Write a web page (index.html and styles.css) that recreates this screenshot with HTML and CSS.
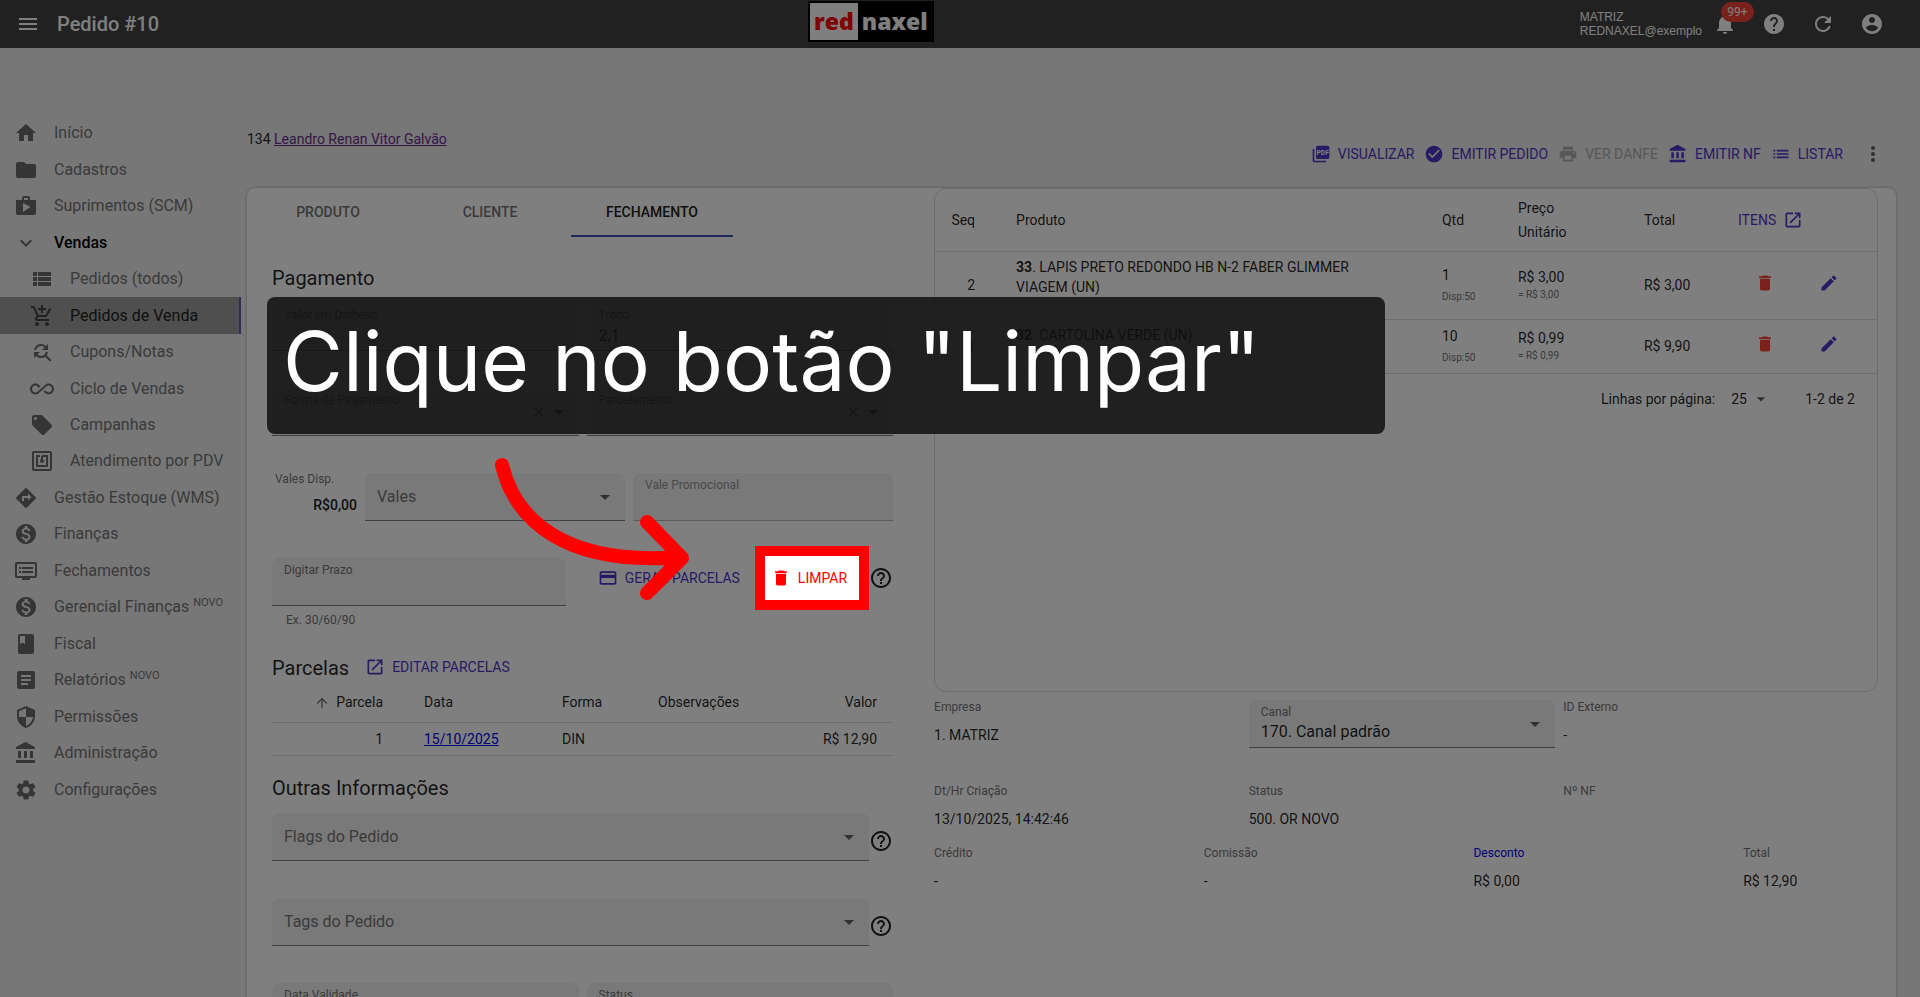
FILE: index.html
```html
<!DOCTYPE html>
<html lang="pt-BR">
<head>
    <meta charset="UTF-8">
    <meta name="viewport" content="width=device-width, initial-scale=1.0">
    <title>Pedido #10</title>
    <link rel="stylesheet" href="styles.css">
</head>
<body>
    <!-- Icons -->
    <svg class="sprite" aria-hidden="true">
        <symbol id="menu" viewBox="0 0 24 24"><path d="M3 18h18v-2H3v2zm0-5h18v-2H3v2zm0-7v2h18V6H3z"/></symbol>
        <symbol id="home" viewBox="0 0 24 24"><path d="M10 20v-6h4v6h5v-8h3L12 3 2 12h3v8z"/></symbol>
        <symbol id="folder" viewBox="0 0 24 24"><path d="M10 4H4c-1.1 0-1.99.9-1.99 2L2 18c0 1.1.9 2 2 2h16c1.1 0 2-.9 2-2V8c0-1.1-.9-2-2-2h-8l-2-2z"/></symbol>
        <symbol id="shop" viewBox="0 0 24 24"><path d="M16 6V4c0-1.11-.89-2-2-2h-4c-1.11 0-2 .89-2 2v2H2v13c0 1.11.89 2 2 2h16c1.11 0 2-.89 2-2V6h-6zm-6-2h4v2h-4V4zM9 18V9l7.5 4L9 18z"/></symbol>
        <symbol id="expand" viewBox="0 0 24 24"><path d="M16.59 8.59L12 13.17 7.41 8.59 6 10l6 6 6-6z"/></symbol>
        <symbol id="view-list" viewBox="0 0 24 24"><path d="M3 9h4V5H3v4zm0 5h4v-4H3v4zm0 5h4v-4H3v4zm5 0h13v-4H8v4zm0-5h13v-4H8v4zm0-9v4h13V5H8z"/></symbol>
        <symbol id="cart" viewBox="0 0 24 24"><path d="M11 9h2V6h3V4h-3V1h-2v3H8v2h3v3zm-4 9c-1.1 0-1.99.9-1.99 2S5.9 22 7 22s2-.9 2-2-.9-2-2-2zm10 0c-1.1 0-1.99.9-1.99 2s.89 2 1.99 2 2-.9 2-2-.9-2-2-2zm-9.83-3.25l.03-.12.9-1.63h7.45c.75 0 1.41-.41 1.75-1.03l3.86-7.01L19.42 4h-.01l-1.1 2-2.76 5H8.53l-.13-.27L6.16 6l-.95-2-.94-2H1v2h2l3.6 7.59-1.35 2.45c-.16.28-.25.61-.25.96 0 1.1.9 2 2 2h12v-2H7.42c-.13 0-.25-.11-.25-.25z"/></symbol>
        <symbol id="find" viewBox="0 0 24 24"><path d="M11 6c1.38 0 2.63.56 3.54 1.46L12 10h6V4l-2.05 2.05C14.68 4.78 12.93 4 11 4c-3.53 0-6.43 2.61-6.92 6H6.1c.46-2.28 2.48-4 4.9-4zm5.64 9.14c.66-.9 1.12-1.97 1.28-3.14H15.9c-.46 2.28-2.48 4-4.9 4-1.38 0-2.63-.56-3.54-1.46L10 12H4v6l2.05-2.05C7.32 17.22 9.07 18 11 18c1.55 0 2.98-.51 4.14-1.36L20 21.49 21.49 20l-4.85-4.86z"/></symbol>
        <symbol id="infinite" viewBox="0 0 24 24"><path d="M18.6 6.62c-1.44 0-2.8.56-3.77 1.53L12 10.66 10.48 12h.01L7.8 14.39c-.64.64-1.49.99-2.4.99-1.87 0-3.39-1.51-3.39-3.38S3.53 8.62 5.4 8.62c.91 0 1.76.35 2.44 1.03l1.13 1 1.51-1.34L9.22 8.2C8.2 7.18 6.84 6.62 5.4 6.62 2.42 6.62 0 9.04 0 12s2.42 5.38 5.4 5.38c1.44 0 2.8-.56 3.77-1.53l2.83-2.5.01.01L13.52 12h-.01l2.69-2.39c.64-.64 1.49-.99 2.4-.99 1.87 0 3.39 1.51 3.39 3.38s-1.52 3.38-3.39 3.38c-.9 0-1.76-.35-2.44-1.03l-1.14-1.01-1.51 1.34 1.27 1.12c1.02 1.01 2.37 1.57 3.82 1.57 2.98 0 5.4-2.41 5.4-5.38s-2.42-5.37-5.4-5.37z"/></symbol>
        <symbol id="offer" viewBox="0 0 24 24"><path d="M21.41 11.58l-9-9C12.05 2.22 11.55 2 11 2H4c-1.1 0-2 .9-2 2v7c0 .55.22 1.05.59 1.42l9 9c.36.36.86.58 1.41.58.55 0 1.05-.22 1.41-.59l7-7c.37-.36.59-.86.59-1.41 0-.55-.23-1.06-.59-1.42zM5.5 7C4.67 7 4 6.33 4 5.5S4.67 4 5.5 4 7 4.67 7 5.5 6.33 7 5.5 7z"/></symbol>
        <symbol id="nfc" viewBox="0 0 24 24"><path d="M20 2H4c-1.1 0-2 .9-2 2v16c0 1.1.9 2 2 2h16c1.1 0 2-.9 2-2V4c0-1.1-.9-2-2-2zm0 18H4V4h16v16zM18 6h-5c-1.1 0-2 .9-2 2v2.28c-.6.35-1 .98-1 1.72 0 1.1.9 2 2 2s2-.9 2-2c0-.74-.4-1.38-1-1.72V8h3v8H8V8h2V6H6v12h12V6z"/></symbol>
        <symbol id="directions" viewBox="0 0 24 24"><path d="M21.71 11.29l-9-9c-.39-.39-1.02-.39-1.41 0l-9 9c-.39.39-.39 1.02 0 1.41l9 9c.39.39 1.02.39 1.41 0l9-9c.39-.38.39-1.01 0-1.41zM14 14.5V12h-4v3H8v-4c0-.55.45-1 1-1h5V7.5l3.5 3.5-3.5 3.5z"/></symbol>
        <symbol id="money" viewBox="0 0 24 24"><path d="M12 2C6.48 2 2 6.48 2 12s4.48 10 10 10 10-4.48 10-10S17.52 2 12 2zm1.41 16.09V20h-2.67v-1.93c-1.71-.36-3.16-1.46-3.27-3.4h1.96c.1 1.05.82 1.87 2.65 1.87 1.96 0 2.4-.98 2.4-1.59 0-.83-.44-1.61-2.67-2.14-2.48-.6-4.18-1.62-4.18-3.67 0-1.72 1.39-2.84 3.11-3.21V4h2.67v1.95c1.86.45 2.79 1.86 2.85 3.39H14.3c-.05-1.11-.64-1.87-2.22-1.87-1.5 0-2.4.68-2.4 1.64 0 .84.65 1.39 2.67 1.91s4.18 1.39 4.18 3.91c-.01 1.83-1.38 2.83-3.12 3.16z"/></symbol>
        <symbol id="dvr" viewBox="0 0 24 24"><path d="M21 3H3c-1.1 0-2 .9-2 2v12c0 1.1.9 2 2 2h5v2h8v-2h5c1.1 0 1.99-.9 1.99-2L23 5c0-1.1-.9-2-2-2zm0 14H3V5h18v12zm-2-9H8v2h11V8zm0 4H8v2h11v-2zM7 8H5v2h2V8zm0 4H5v2h2v-2z"/></symbol>
        <symbol id="book" viewBox="0 0 24 24"><path d="M18 2H6c-1.1 0-2 .9-2 2v16c0 1.1.9 2 2 2h12c1.1 0 2-.9 2-2V4c0-1.1-.9-2-2-2zM6 4h5v8l-2.5-1.5L6 12V4z"/></symbol>
        <symbol id="article" viewBox="0 0 24 24"><path d="M19 3H5c-1.1 0-2 .9-2 2v14c0 1.1.9 2 2 2h14c1.1 0 2-.9 2-2V5c0-1.1-.9-2-2-2zm-5 14H7v-2h7v2zm3-4H7v-2h10v2zm0-4H7V7h10v2z"/></symbol>
        <symbol id="shield" viewBox="0 0 24 24"><path d="M12 1L3 5v6c0 5.55 3.84 10.74 9 12 5.16-1.26 9-6.45 9-12V5l-9-4zm0 10.99h7c-.53 4.12-3.28 7.79-7 8.94V12H5V6.3l7-3.11v8.8z"/></symbol>
        <symbol id="bank" viewBox="0 0 24 24"><path d="M4 10v7h3v-7H4zm6 0v7h3v-7h-3zM2 22h19v-3H2v3zm14-12v7h3v-7h-3zm-4.5-9L2 6v2h19V6l-9.5-5z"/></symbol>
        <symbol id="settings" viewBox="0 0 24 24"><path d="M19.14 12.94c.04-.3.06-.61.06-.94 0-.32-.02-.64-.07-.94l2.03-1.58c.18-.14.23-.41.12-.61l-1.92-3.32c-.12-.22-.37-.29-.59-.22l-2.39.96c-.5-.38-1.03-.7-1.62-.94l-.36-2.54c-.04-.24-.24-.41-.48-.41h-3.84c-.24 0-.43.17-.47.41l-.36 2.54c-.59.24-1.13.57-1.62.94l-2.39-.96c-.22-.08-.47 0-.59.22L2.74 8.87c-.12.21-.08.47.12.61l2.03 1.58c-.05.3-.09.63-.09.94s.02.64.07.94l-2.03 1.58c-.18.14-.23.41-.12.61l1.92 3.32c.12.22.37.29.59.22l2.39-.96c.5.38 1.03.7 1.62.94l.36 2.54c.05.24.24.41.48.41h3.84c.24 0 .44-.17.47-.41l.36-2.54c.59-.24 1.13-.56 1.62-.94l2.39.96c.22.08.47 0 .59-.22l1.92-3.32c.12-.22.07-.47-.12-.61l-2.01-1.58zM12 15.6c-1.98 0-3.6-1.62-3.6-3.6s1.62-3.6 3.6-3.6 3.6 1.62 3.6 3.6-1.62 3.6-3.6 3.6z"/></symbol>
        <symbol id="bell" viewBox="0 0 24 24"><path d="M12 22c1.1 0 2-.9 2-2h-4c0 1.1.89 2 2 2zm6-6v-5c0-3.07-1.64-5.64-4.5-6.32V4c0-.83-.67-1.5-1.5-1.5s-1.5.67-1.5 1.5v.68C7.63 5.36 6 7.92 6 11v5l-2 2v1h16v-1l-2-2z"/></symbol>
        <symbol id="help" viewBox="0 0 24 24"><path d="M12 2C6.48 2 2 6.48 2 12s4.48 10 10 10 10-4.48 10-10S17.52 2 12 2zm1 17h-2v-2h2v2zm2.07-7.75l-.9.92C13.45 12.9 13 13.5 13 15h-2v-.5c0-1.1.45-2.1 1.17-2.83l1.24-1.26c.37-.36.59-.86.59-1.41 0-1.1-.9-2-2-2s-2 .9-2 2H8c0-2.21 1.79-4 4-4s4 1.79 4 4c0 .88-.36 1.68-.93 2.25z"/></symbol>
        <symbol id="help-outline" viewBox="0 0 24 24"><path d="M11 18h2v-2h-2v2zm1-16C6.48 2 2 6.48 2 12s4.48 10 10 10 10-4.48 10-10S17.52 2 12 2zm0 18c-4.41 0-8-3.59-8-8s3.59-8 8-8 8 3.59 8 8-3.59 8-8 8zm0-14c-2.21 0-4 1.79-4 4h2c0-1.1.9-2 2-2s2 .9 2 2c0 2-3 1.75-3 5h2c0-2.25 3-2.5 3-5 0-2.21-1.79-4-4-4z"/></symbol>
        <symbol id="refresh" viewBox="0 0 24 24"><path d="M17.65 6.35C16.2 4.9 14.21 4 12 4c-4.42 0-7.99 3.58-7.99 8s3.57 8 7.99 8c3.73 0 6.84-2.55 7.73-6h-2.08c-.82 2.33-3.04 4-5.65 4-3.31 0-6-2.69-6-6s2.69-6 6-6c1.66 0 3.14.69 4.22 1.78L13 11h7V4l-2.35 2.35z"/></symbol>
        <symbol id="account" viewBox="0 0 24 24"><path d="M12 2C6.48 2 2 6.48 2 12s4.48 10 10 10 10-4.48 10-10S17.52 2 12 2zm0 3c1.66 0 3 1.34 3 3s-1.34 3-3 3-3-1.34-3-3 1.34-3 3-3zm0 14.2c-2.5 0-4.71-1.28-6-3.22.03-1.99 4-3.08 6-3.08 1.99 0 5.97 1.09 6 3.08-1.29 1.94-3.5 3.22-6 3.22z"/></symbol>
        <symbol id="pdf" viewBox="0 0 24 24"><path d="M20 2H8c-1.1 0-2 .9-2 2v12c0 1.1.9 2 2 2h12c1.1 0 2-.9 2-2V4c0-1.1-.9-2-2-2zM4 6H2v14c0 1.1.9 2 2 2h14v-2H4V6z"/><text x="14" y="13" class="pdf-text">PDF</text></symbol>
        <symbol id="check" viewBox="0 0 24 24"><path d="M12 2C6.48 2 2 6.48 2 12s4.48 10 10 10 10-4.48 10-10S17.52 2 12 2zm-2 15l-5-5 1.41-1.41L10 14.17l7.59-7.59L19 8l-9 9z"/></symbol>
        <symbol id="print" viewBox="0 0 24 24"><path d="M19 8H5c-1.66 0-3 1.34-3 3v6h4v4h12v-4h4v-6c0-1.66-1.34-3-3-3zm-3 11H8v-5h8v5zm3-7c-.55 0-1-.45-1-1s.45-1 1-1 1 .45 1 1-.45 1-1 1zm-1-9H6v4h12V3z"/></symbol>
        <symbol id="list" viewBox="0 0 24 24"><path d="M3 13h2v-2H3v2zm0 4h2v-2H3v2zm0-8h2V7H3v2zm4 4h14v-2H7v2zm0 4h14v-2H7v2zM7 7v2h14V7H7z"/></symbol>
        <symbol id="more" viewBox="0 0 24 24"><path d="M12 8c1.1 0 2-.9 2-2s-.9-2-2-2-2 .9-2 2 .9 2 2 2zm0 2c-1.1 0-2 .9-2 2s.9 2 2 2 2-.9 2-2-.9-2-2-2zm0 6c-1.1 0-2 .9-2 2s.9 2 2 2 2-.9 2-2-.9-2-2-2z"/></symbol>
        <symbol id="open" viewBox="0 0 24 24"><path d="M19 19H5V5h7V3H5c-1.11 0-2 .9-2 2v14c0 1.1.89 2 2 2h14c1.1 0 2-.9 2-2v-7h-2v7zM14 3v2h3.59l-9.83 9.83 1.41 1.41L19 6.41V10h2V3h-7z"/></symbol>
        <symbol id="delete" viewBox="0 0 24 24"><path d="M6 19c0 1.1.9 2 2 2h8c1.1 0 2-.9 2-2V7H6v12zM19 4h-3.5l-1-1h-5l-1 1H5v2h14V4z"/></symbol>
        <symbol id="edit" viewBox="0 0 24 24"><path d="M3 17.25V21h3.75L17.81 9.94l-3.75-3.75L3 17.25zM20.71 7.04c.39-.39.39-1.02 0-1.41l-2.34-2.34c-.39-.39-1.02-.39-1.41 0l-1.83 1.83 3.75 3.75 1.83-1.83z"/></symbol>
        <symbol id="payment" viewBox="0 0 24 24"><path d="M20 4H4c-1.11 0-1.99.89-1.99 2L2 18c0 1.11.89 2 2 2h16c1.11 0 2-.89 2-2V6c0-1.11-.89-2-2-2zm0 14H4v-6h16v6zm0-10H4V6h16v2z"/></symbol>
        <symbol id="up" viewBox="0 0 24 24"><path d="M4 12l1.41 1.41L11 7.83V20h2V7.83l5.58 5.59L20 12l-8-8-8 8z"/></symbol>
        <symbol id="drop" viewBox="0 0 24 24"><path d="M7 10l5 5 5-5z"/></symbol>
        <symbol id="close" viewBox="0 0 24 24"><path d="M19 6.41L17.59 5 12 10.59 6.41 5 5 6.41 10.59 12 5 17.59 6.41 19 12 13.41 17.59 19 19 17.59 13.41 12z"/></symbol>
    </svg>

    <header class="header">
        <div class="header-left">
            <button class="icon-button" aria-label="Menu"><svg class="icon"><use href="#menu"/></svg></button>
            <h1>Pedido #10</h1>
        </div>
        <div class="logo"><span class="logo-red">red</span><span class="logo-name">naxel</span></div>
        <div class="header-right">
            <div class="user">MATRIZ<br>REDNAXEL@exemplo</div>
            <button class="icon-button bell" aria-label="Notificações"><svg class="icon"><use href="#bell"/></svg><span class="badge">99+</span></button>
            <button class="icon-button" aria-label="Ajuda"><svg class="icon"><use href="#help"/></svg></button>
            <button class="icon-button" aria-label="Atualizar"><svg class="icon"><use href="#refresh"/></svg></button>
            <button class="icon-button" aria-label="Conta"><svg class="icon"><use href="#account"/></svg></button>
        </div>
    </header>

    <div class="layout">
        <nav class="sidebar">
            <a href="#"><svg class="icon"><use href="#home"/></svg>Início</a>
            <a href="#"><svg class="icon"><use href="#folder"/></svg>Cadastros</a>
            <a href="#"><svg class="icon"><use href="#shop"/></svg>Suprimentos (SCM)</a>
            <a href="#" class="open"><svg class="icon"><use href="#expand"/></svg>Vendas</a>
            <a href="#" class="sub"><svg class="icon"><use href="#view-list"/></svg>Pedidos (todos)</a>
            <a href="#" class="sub active"><svg class="icon"><use href="#cart"/></svg>Pedidos de Venda</a>
            <a href="#" class="sub"><svg class="icon"><use href="#find"/></svg>Cupons/Notas</a>
            <a href="#" class="sub"><svg class="icon"><use href="#infinite"/></svg>Ciclo de Vendas</a>
            <a href="#" class="sub"><svg class="icon"><use href="#offer"/></svg>Campanhas</a>
            <a href="#" class="sub"><svg class="icon"><use href="#nfc"/></svg>Atendimento por PDV</a>
            <a href="#"><svg class="icon"><use href="#directions"/></svg>Gestão Estoque (WMS)</a>
            <a href="#"><svg class="icon"><use href="#money"/></svg>Finanças</a>
            <a href="#"><svg class="icon"><use href="#dvr"/></svg>Fechamentos</a>
            <a href="#"><svg class="icon"><use href="#money"/></svg><span>Gerencial Finanças <sup>NOVO</sup></span></a>
            <a href="#"><svg class="icon"><use href="#book"/></svg>Fiscal</a>
            <a href="#"><svg class="icon"><use href="#article"/></svg><span>Relatórios <sup>NOVO</sup></span></a>
            <a href="#"><svg class="icon"><use href="#shield"/></svg>Permissões</a>
            <a href="#"><svg class="icon"><use href="#bank"/></svg>Administração</a>
            <a href="#"><svg class="icon"><use href="#settings"/></svg>Configurações</a>
        </nav>

        <main class="main">
            <div class="toolbar">
                <div class="customer">134 <a href="#">Leandro Renan Vitor Galvão</a></div>
                <div class="actions">
                    <button class="action"><svg class="icon"><use href="#pdf"/></svg>VISUALIZAR</button>
                    <button class="action"><svg class="icon"><use href="#check"/></svg>EMITIR PEDIDO</button>
                    <button class="action" disabled><svg class="icon"><use href="#print"/></svg>VER DANFE</button>
                    <button class="action"><svg class="icon"><use href="#bank"/></svg>EMITIR NF</button>
                    <button class="action"><svg class="icon"><use href="#list"/></svg>LISTAR</button>
                    <button class="icon-button more" aria-label="Mais opções"><svg class="icon"><use href="#more"/></svg></button>
                </div>
            </div>

            <div class="card">
                <section class="payment">
                    <div class="tabs">
                        <button class="tab">PRODUTO</button>
                        <button class="tab">CLIENTE</button>
                        <button class="tab selected">FECHAMENTO</button>
                    </div>

                    <div class="form">
                        <h2>Pagamento</h2>
                        <div class="row">
                            <div class="field"><label for="dinheiro">Valor em Dinheiro</label><input id="dinheiro" type="text"></div>
                            <div class="field"><label for="troco">Troco</label><input id="troco" type="text" value="2,1"></div>
                        </div>
                        <div class="row">
                            <div class="field">
                                <label for="forma">Forma de Pagamento</label>
                                <select id="forma"><option></option></select>
                                <span class="adorn"><svg class="icon small"><use href="#close"/></svg><svg class="icon"><use href="#drop"/></svg></span>
                            </div>
                            <div class="field">
                                <label for="parcelamento">Parcelamento</label>
                                <select id="parcelamento"><option></option></select>
                                <span class="adorn"><svg class="icon small"><use href="#close"/></svg><svg class="icon"><use href="#drop"/></svg></span>
                            </div>
                        </div>
                        <div class="row">
                            <div class="available"><span>Vales Disp.</span><strong>R$0,00</strong></div>
                            <div class="field empty">
                                <select aria-label="Vales"><option>Vales</option></select>
                                <span class="adorn"><svg class="icon"><use href="#drop"/></svg></span>
                            </div>
                            <div class="field light"><label for="promo">Vale Promocional</label><input id="promo" type="text" disabled></div>
                        </div>
                        <div class="row prazo">
                            <div class="prazo-field">
                                <div class="field"><label for="prazo">Digitar Prazo</label><input id="prazo" type="text"></div>
                                <p class="hint">Ex. 30/60/90</p>
                            </div>
                            <div class="prazo-actions">
                                <button class="action"><svg class="icon"><use href="#payment"/></svg>GERAR PARCELAS</button>
                                <button class="action clear"><svg class="icon"><use href="#delete"/></svg>LIMPAR<span class="spotlight"></span></button>
                                <button class="icon-button help" aria-label="Ajuda"><svg class="icon"><use href="#help-outline"/></svg></button>
                            </div>
                        </div>

                        <div class="subtitle">
                            <h2>Parcelas</h2>
                            <button class="action"><svg class="icon"><use href="#open"/></svg>EDITAR PARCELAS</button>
                        </div>
                        <table class="installments">
                            <thead>
                                <tr><th class="num"><svg class="icon small"><use href="#up"/></svg>Parcela</th><th>Data</th><th>Forma</th><th>Observações</th><th class="num">Valor</th></tr>
                            </thead>
                            <tbody>
                                <tr><td class="num">1</td><td><a href="#">15/10/2025</a></td><td>DIN</td><td></td><td class="num">R$ 12,90</td></tr>
                            </tbody>
                        </table>

                        <h2>Outras Informações</h2>
                        <div class="row tagged">
                            <div class="field empty">
                                <select aria-label="Flags do Pedido"><option>Flags do Pedido</option></select>
                                <span class="adorn"><svg class="icon"><use href="#drop"/></svg></span>
                            </div>
                            <button class="icon-button help" aria-label="Ajuda"><svg class="icon"><use href="#help-outline"/></svg></button>
                        </div>
                        <div class="row tagged">
                            <div class="field empty">
                                <select aria-label="Tags do Pedido"><option>Tags do Pedido</option></select>
                                <span class="adorn"><svg class="icon"><use href="#drop"/></svg></span>
                            </div>
                            <button class="icon-button help" aria-label="Ajuda"><svg class="icon"><use href="#help-outline"/></svg></button>
                        </div>
                        <div class="row">
                            <div class="field"><label for="validade">Data Validade</label><input id="validade" type="text"></div>
                            <div class="field"><label for="status">Status</label><input id="status" type="text"></div>
                        </div>
                    </div>
                </section>

                <section class="order">
                    <div class="items">
                        <table>
                            <colgroup><col class="c-seq"><col><col class="c-qty"><col class="c-price"><col class="c-total"><col class="c-del"><col class="c-edit"></colgroup>
                            <thead>
                                <tr><th class="seq">Seq</th><th>Produto</th><th>Qtd</th><th class="price">Preço Unitário</th><th>Total</th><th colspan="2" class="th-items"><button class="action">ITENS<svg class="icon"><use href="#open"/></svg></button></th></tr>
                            </thead>
                            <tbody>
                                <tr class="tall">
                                    <td class="seq">2</td>
                                    <td class="product"><b>33</b>. LAPIS PRETO REDONDO HB N-2 FABER GLIMMER VIAGEM (UN)</td>
                                    <td>1<small class="stock">Disp:50</small></td>
                                    <td>R$ 3,00<small>= R$ 3,00</small></td>
                                    <td>R$ 3,00</td>
                                    <td class="tool"><button class="icon-button del" aria-label="Excluir"><svg class="icon"><use href="#delete"/></svg></button></td>
                                    <td class="tool last"><button class="icon-button edit" aria-label="Editar"><svg class="icon"><use href="#edit"/></svg></button></td>
                                </tr>
                                <tr>
                                    <td class="seq">1</td>
                                    <td class="product"><b>32</b>. CARTOLINA VERDE (UN)</td>
                                    <td>10<small class="stock">Disp:50</small></td>
                                    <td>R$ 0,99<small>= R$ 0,99</small></td>
                                    <td>R$ 9,90</td>
                                    <td class="tool"><button class="icon-button del" aria-label="Excluir"><svg class="icon"><use href="#delete"/></svg></button></td>
                                    <td class="tool last"><button class="icon-button edit" aria-label="Editar"><svg class="icon"><use href="#edit"/></svg></button></td>
                                </tr>
                            </tbody>
                        </table>
                        <div class="pagination">
                            <label for="linhas">Linhas por página:</label>
                            <span class="page-size"><select id="linhas"><option>25</option></select><svg class="icon"><use href="#drop"/></svg></span>
                            <span>1-2 de 2</span>
                        </div>
                    </div>

                    <div class="info three">
                        <div class="data"><span>Empresa</span><p>1. MATRIZ</p></div>
                        <div class="field">
                            <label for="canal">Canal</label>
                            <select id="canal"><option>170. Canal padrão</option></select>
                            <span class="adorn"><svg class="icon"><use href="#drop"/></svg></span>
                        </div>
                        <div class="data"><span>ID Externo</span><p>-</p></div>
                    </div>
                    <div class="info three">
                        <div class="data"><span>Dt/Hr Criação</span><p>13/10/2025, 14:42:46</p></div>
                        <div class="data"><span>Status</span><p>500. OR NOVO</p></div>
                        <div class="data"><span>Nº NF</span></div>
                    </div>
                    <div class="info totals">
                        <div class="data"><span>Crédito</span><p>-</p></div>
                        <div class="data"><span>Comissão</span><p>-</p></div>
                        <div class="data"><a href="#">Desconto</a><p>R$ 0,00</p></div>
                        <div class="data"><span>Total</span><p>R$ 12,90</p></div>
                    </div>
                </section>
            </div>
        </main>
    </div>

    <!-- Tutorial step -->
    <div class="callout">Clique no botão "Limpar"</div>
    <svg class="arrow" viewBox="0 0 200 150" aria-hidden="true">
        <path d="M12 15C25 70 75 116 190 107M157 72L192 108L157 143"/>
    </svg>
</body>
</html>
```
FILE: styles.css
```css
* {
    margin: 0;
    padding: 0;
    box-sizing: border-box;
}

body {
    background-color: #eeeeee;
    color: rgba(0, 0, 0, 0.87);
    font-family: Roboto, "Liberation Sans", sans-serif;
    font-size: 14px;
    line-height: 20px;
    height: 100vh;
    overflow: hidden;
}

button, input, select {
    font: inherit;
    color: inherit;
    background: none;
    border: none;
    outline: none;
}

.sprite {
    display: none;
}

.pdf-text {
    font-size: 8px;
    font-weight: 700;
    text-anchor: middle;
    fill: #ffffff;
}

.icon {
    width: 24px;
    height: 24px;
    fill: currentColor;
    flex-shrink: 0;
    display: block;
}

.icon.small {
    width: 16px;
    height: 16px;
}

.icon-button {
    display: inline-flex;
    cursor: pointer;
}

/* Header */
.header {
    display: grid;
    grid-template-columns: 5fr auto 6fr;
    align-items: center;
    height: 48px;
    padding: 0 36px 0 16px;
    background-color: #424242;
    color: #ffffff;
}

.header-left {
    display: flex;
    align-items: center;
    gap: 17px;
}

.header h1 {
    font-size: 20px;
    font-weight: 500;
}

.logo {
    display: flex;
    height: 41px;
    margin-bottom: 6px;
    padding: 2px;
    background-color: #000000;
    font-family: "Open Sans", sans-serif;
    font-size: 23px;
    font-weight: 800;
    line-height: 37px;
}

.logo-red {
    padding: 0 4px;
    background-color: #ffffff;
    color: #ff0000;
}

.logo-name {
    padding: 0 4px;
}

.header-right {
    display: flex;
    align-items: center;
    justify-content: flex-end;
    gap: 25px;
}

.user {
    font-family: "Liberation Sans", sans-serif;
    font-size: 12px;
    line-height: 14px;
    margin-right: -14px;
}

.bell {
    position: relative;
}

.badge {
    position: absolute;
    left: 8px;
    bottom: 14px;
    min-width: 33px;
    padding: 0 6px;
    border-radius: 10px;
    background-color: #f44336;
    font-size: 12px;
}

/* Layout */
.layout {
    display: flex;
}

.sidebar {
    display: grid;
    grid-auto-rows: 1fr;
    flex: 0 0 241px;
    height: 693px;
    margin-top: 67px;
}

.sidebar a {
    display: flex;
    align-items: center;
    gap: 16px;
    padding-left: 14px;
    color: #757575;
    font-size: 16px;
    text-decoration: none;
    white-space: nowrap;
}

.sidebar .icon {
    color: #6a6a6a;
}

.sidebar a.sub {
    padding-left: 30px;
}

.sidebar a.open {
    color: #000000;
    font-weight: 500;
}

.sidebar a.active {
    background-color: #9e9e9e;
    border-right: 2px solid #5c5cb0;
    color: #212121;
}

.sidebar a.active .icon {
    color: #424242;
}

.sidebar sup {
    font-size: 11px;
    line-height: 0;
}

.main {
    flex: 1;
    min-width: 0;
    padding: 0 24px 0 6px;
}

.toolbar {
    display: flex;
    justify-content: space-between;
    height: 140px;
    padding-top: 81px;
}

.customer a {
    color: #6a2c91;
}

.actions {
    display: flex;
    align-items: center;
    gap: 10px;
    height: 50px;
}

.action {
    display: inline-flex;
    align-items: center;
    gap: 7px;
    color: #5035c8;
    white-space: nowrap;
    cursor: pointer;
}

.action .icon {
    width: 20px;
    height: 20px;
}

.action:disabled {
    color: #b0b0b0;
}

.more {
    margin: 0 11px 0 8px;
    color: #616161;
}

/* Order card */
.card {
    display: grid;
    grid-template-columns: 5fr 7fr;
    min-height: 900px;
    background-color: #ffffff;
    border-radius: 8px;
    box-shadow: 0 0 3px rgba(0, 0, 0, 0.3);
}

.tabs {
    display: flex;
}

.tab {
    width: 162px;
    height: 49px;
    border-bottom: 2px solid transparent;
    color: #757575;
    font-weight: 500;
    cursor: pointer;
}

.tab.selected {
    border-color: #3f51b5;
    color: #212121;
}

.form {
    padding: 27px 41px 0 25px;
}

h2 {
    font-size: 20px;
    font-weight: 400;
    line-height: 28px;
    margin-bottom: 11px;
}

.row {
    display: flex;
    gap: 8px;
    margin-bottom: 37px;
}

.field {
    position: relative;
    flex: 1;
    height: 48px;
    padding: 0 12px;
    background-color: #f3f3f3;
    border-bottom: 1px solid #808080;
    border-radius: 8px 8px 0 0;
}

.field.light {
    border-bottom-color: #b8b8b8;
}

.field label {
    display: block;
    padding-top: 4px;
    color: #757575;
    font-size: 12px;
    line-height: 16px;
}

.field input, .field select {
    display: block;
    width: 100%;
    height: 24px;
    font-size: 16px;
    appearance: none;
}

.field.light label {
    color: #949494;
}

.field.empty select {
    height: 48px;
    color: #757575;
}

.adorn {
    position: absolute;
    top: 12px;
    right: 8px;
    display: flex;
    align-items: center;
    color: #616161;
    pointer-events: none;
}

.available {
    display: flex;
    flex-direction: column;
    width: 85px;
    padding-left: 3px;
    color: #757575;
    font-size: 12px;
    line-height: 12px;
}

.available strong {
    align-self: flex-end;
    margin-top: 10px;
    color: #212121;
    font-size: 14px;
    font-weight: 500;
    line-height: 20px;
}

.prazo {
    justify-content: space-between;
    margin-bottom: 20px;
}

.prazo-field {
    width: 294px;
}

.hint {
    padding: 4px 14px;
    color: #757575;
    font-size: 12px;
}

.prazo-actions {
    display: flex;
    align-items: center;
    height: 40px;
}

.clear {
    position: relative;
    margin: 0 22px 0 31px;
    color: #ff0000;
}

/* Everything outside the highlighted button is dimmed */
.spotlight {
    position: absolute;
    z-index: 10;
    inset: -22px -22px -22px -16px;
    border: 10px solid #ff0000;
    box-shadow: 0 0 0 9999px rgba(0, 0, 0, 0.5);
}

.subtitle {
    display: flex;
    gap: 16px;
    height: 28px;
}

.subtitle .action {
    height: 26px;
}

table {
    width: 100%;
    border-collapse: collapse;
}

th {
    font-weight: 400;
    text-align: left;
}

.num {
    text-align: right;
}

.installments {
    margin-bottom: 18px;
    table-layout: fixed;
}

.installments th, .installments td {
    height: 33px;
    padding: 0 16px;
    border-bottom: 1px solid #dddddd;
}

.installments th {
    height: 40px;
}

.installments .num:first-child {
    padding-right: 25px;
}

.installments th .icon {
    display: inline-block;
    margin-right: 6px;
    vertical-align: middle;
    color: #757575;
}

.installments th:nth-child(1) { width: 136px; }
.installments th:nth-child(2) { width: 138px; }
.installments th:nth-child(3) { width: 96px; }
.installments th:nth-child(4) { width: 140px; }

.installments a {
    color: #0000ee;
}

.tagged {
    align-items: center;
    gap: 0;
}

.help {
    color: #212121;
}

.tagged .help {
    margin-top: 8px;
}

/* Items and totals */
.order {
    padding-right: 18px;
}

.items {
    height: 504px;
    margin-bottom: 8px;
    border: 1px solid #dddddd;
    border-radius: 12px;
}

.items table {
    table-layout: fixed;
}

.items th, .items td {
    height: 54px;
    padding: 0 16px;
    border-bottom: 1px solid #dddddd;
}

.items th {
    height: 62px;
    line-height: 24px;
}

.items .tall td {
    height: 68px;
}

.c-seq { width: 65px; }
.c-qty { width: 76px; }
.c-price { width: 126px; }
.c-total { width: 105px; }
.c-del { width: 64px; }
.c-edit { width: 80px; }

.items .seq {
    padding-right: 25px;
    text-align: right;
}

.items .th-items {
    padding-left: 5px;
}

.items .price {
    padding-right: 50px;
}

.items .product {
    padding: 5px 50px 0 16px;
    vertical-align: top;
}

.items small {
    display: block;
    color: #757575;
    font-size: 10px;
    line-height: 16px;
}

.items .stock {
    margin-top: 4px;
}

.items .tool {
    padding: 0;
    text-align: center;
}

.items .tool.last {
    padding-right: 16px;
}

.tool .icon {
    width: 20px;
    height: 20px;
}

.del {
    color: #f44336;
}

.edit {
    color: #5035c8;
}

.pagination {
    display: flex;
    justify-content: flex-end;
    gap: 16px;
    padding: 15px 22px 0 0;
}

.page-size {
    display: flex;
    align-items: center;
    margin-right: 16px;
}

.page-size select {
    width: 18px;
    appearance: none;
}

.page-size .icon {
    height: 20px;
    color: #616161;
}

.info {
    display: grid;
}

.three {
    grid-template-columns: repeat(3, 1fr);
    height: 84px;
}

.three + .three {
    height: 62px;
}

.three .field {
    margin-right: 8px;
}

.totals {
    grid-template-columns: 2fr 2fr 2fr 1fr;
}

.data span, .data a {
    display: block;
    margin-bottom: 11px;
    color: #757575;
    font-size: 12px;
    line-height: 14px;
    text-decoration: none;
}

.data a {
    color: #0000ee;
}

/* Tutorial overlay */
.callout {
    position: absolute;
    z-index: 11;
    top: 297px;
    left: 267px;
    width: 1118px;
    height: 137px;
    padding-left: 16px;
    border-radius: 8px;
    background-color: rgba(15, 15, 15, 0.85);
    color: #ffffff;
    font-family: Inter, sans-serif;
    font-size: 82px;
    line-height: 130px;
    white-space: nowrap;
}

.arrow {
    position: absolute;
    z-index: 12;
    top: 450px;
    left: 490px;
    width: 200px;
    height: 150px;
    fill: none;
    stroke: #ff0000;
    stroke-width: 14;
    stroke-linecap: round;
    stroke-linejoin: round;
}
```
